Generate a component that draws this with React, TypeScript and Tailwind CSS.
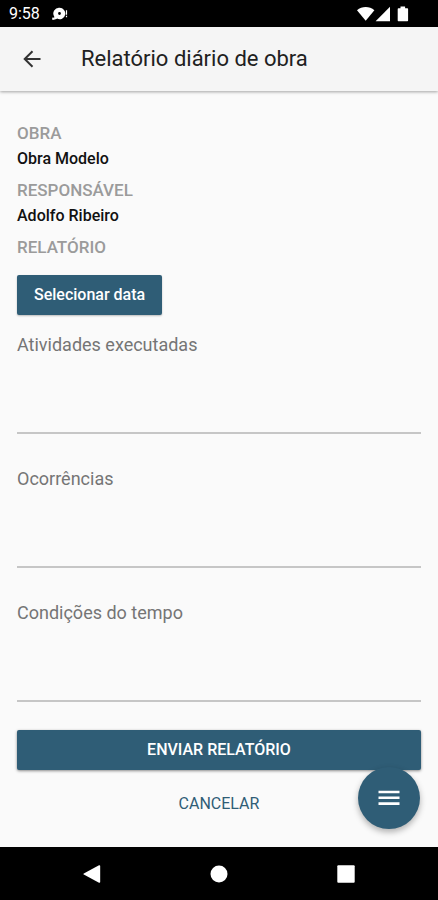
import { ReactNode, useState } from 'react';

interface InfoRowProps {
  label: string;
  value: string;
}

interface ReportFieldProps {
  id: string;
  label: string;
  value: string;
  onChange: (value: string) => void;
}

const reportFields = [
  { id: 'atividades', label: 'Atividades executadas' },
  { id: 'ocorrencias', label: 'Ocorrências' },
  { id: 'tempo', label: 'Condições do tempo' },
];

function StatusBar() {
  return (
    <div className="h-[27px] bg-black text-white flex items-center justify-between pl-[9px] pr-[29px]">
      <div className="flex items-center gap-3">
        <span className="text-base leading-6">9:58</span>
        <svg width="16" height="14" viewBox="0 0 16 14" fill="currentColor" aria-hidden="true">
          <path
            fillRule="evenodd"
            d="M7.500 .8a5.700 5.700 0 1 1-2.400 10.800c-.8.700-2 1-3.400 1 .4-1 .6-2 .5-3.100A5.700 5.700 0 0 1 7.500.8zm0 4.300a1.400 1.400 0 1 0 0 2.800 1.400 1.400 0 0 0 0-2.800z"
          />
          <path d="M.2 10.600h2v2.200h-2z" />
          <path d="M13.900 3.200h1.200v4.600h-1.200zM13.900 8.700h1.200v1.500h-1.200z" />
        </svg>
      </div>
      <div className="flex items-center" aria-hidden="true">
        <svg width="52" height="16" viewBox="0 0 52 16" fill="currentColor">
          <path d="M0 4.200C5-.2 12.400-.2 17.400 4.200L8.700 14.800z" />
          <path d="M18.600 15.200L33 .8v14.400z" />
          <path d="M43.500.4h4.600v1.800h2c.6 0 1 .4 1 1v11c0 .6-.4 1-1 1h-8.400c-.6 0-1-.4-1-1v-11c0-.6.4-1 1-1h1.800z" />
        </svg>
      </div>
    </div>
  );
}

function AppBar({ children }: { children: ReactNode }) {
  return (
    <header className="relative h-16 bg-[#f5f5f5] flex items-center px-3 shadow-[0_1px_3px_rgba(0,0,0,0.35)]">
      <button type="button" aria-label="Voltar" className="size-10 flex items-center justify-center text-[#333]">
        <svg width="18" height="18" viewBox="0 0 18 18" fill="none" stroke="currentColor" strokeWidth="2">
          <path d="M17.500 9H2M9.500 1.200L1.700 9l7.800 7.800" />
        </svg>
      </button>
      <h1 className="ml-[29px] text-[22px] leading-8 text-[#212121]">{children}</h1>
    </header>
  );
}

function InfoRow({ label, value }: InfoRowProps) {
  return (
    <div>
      <dt className="text-[17px] leading-[25px] font-medium text-[#9b9b9b]">{label}</dt>
      <dd className="text-base leading-[25px] font-medium text-[#111]">{value}</dd>
    </div>
  );
}

function ReportField({ id, label, value, onChange }: ReportFieldProps) {
  return (
    <div className="flex flex-col">
      <label htmlFor={id} className="text-lg leading-6 text-[#757575]">
        {label}
      </label>
      <textarea
        id={id}
        value={value}
        onChange={(e) => onChange(e.target.value)}
        className="h-[77px] resize-none bg-transparent border-b-2 border-[#c6c6c6] text-base outline-none focus:border-[#2f5d76]"
      />
    </div>
  );
}

function NavigationBar() {
  return (
    <nav className="h-[53px] bg-black text-white flex items-center justify-between px-[83px]">
      <button type="button" aria-label="Voltar no sistema">
        <svg width="18" height="18" viewBox="0 0 18 18" fill="currentColor">
          <path d="M16 .3c.6-.3 1.200 0 1.200.7v16c0 .7-.6 1-1.200.7L.8 9.600c-.5-.3-.5-.9 0-1.200z" />
        </svg>
      </button>
      <button type="button" aria-label="Início">
        <svg width="18" height="18" viewBox="0 0 18 18" fill="currentColor">
          <circle cx="9" cy="9" r="8.500" />
        </svg>
      </button>
      <button type="button" aria-label="Aplicativos recentes">
        <svg width="18" height="18" viewBox="0 0 18 18" fill="currentColor">
          <rect x=".3" y=".3" width="17.400" height="17.400" rx="1" />
        </svg>
      </button>
    </nav>
  );
}

export default function App() {
  const [values, setValues] = useState<Record<string, string>>({});

  const handleChange = (id: string, value: string) => {
    setValues((prev) => ({ ...prev, [id]: value }));
  };

  return (
    <div className="min-h-screen flex flex-col bg-[#fafafa] font-[Roboto,sans-serif]">
      <StatusBar />
      <AppBar>Relatório diário de obra</AppBar>

      <main className="relative flex-1 px-[17px] pt-[30px] pb-4">
        <form onSubmit={(e) => e.preventDefault()}>
          <dl className="flex flex-col gap-[7px]">
            <InfoRow label="OBRA" value="Obra Modelo" />
            <InfoRow label="RESPONSÁVEL" value="Adolfo Ribeiro" />
          </dl>
          <h2 className="mt-[7px] text-[17px] leading-[25px] font-medium text-[#9b9b9b]">RELATÓRIO</h2>

          <button
            type="button"
            className="mt-[15px] h-10 px-[17px] rounded-xs bg-[#2f5d76] text-white text-base font-medium shadow-[0_1px_2px_rgba(0,0,0,0.25)]"
          >
            Selecionar data
          </button>

          <div className="mt-[18px] flex flex-col gap-[33px]">
            {reportFields.map(({ id, label }) => (
              <ReportField
                key={id}
                id={id}
                label={label}
                value={values[id] ?? ''}
                onChange={(value) => handleChange(id, value)}
              />
            ))}
          </div>

          <button
            type="submit"
            className="mt-7 w-full h-10 rounded-xs bg-[#2f5d76] text-white text-base font-medium shadow-[0_1px_3px_rgba(0,0,0,0.45)]"
          >
            ENVIAR RELATÓRIO
          </button>
          <button type="button" className="mt-[14px] w-full h-10 text-base text-[#2f5d76]">
            CANCELAR
          </button>
        </form>

        <button
          type="button"
          aria-label="Menu"
          className="absolute right-[18px] bottom-[18px] size-[62px] rounded-full bg-[#2f5d76] text-white flex items-center justify-center shadow-[0_3px_6px_rgba(0,0,0,0.3)]"
        >
          <svg width="22" height="16" viewBox="0 0 22 16" fill="currentColor">
            <path d="M.5.700h21v2.600H.5zM.5 6.500h21v2.600H.5zM.5 12.300h21v2.600H.5z" />
          </svg>
        </button>
      </main>

      <NavigationBar />
    </div>
  );
}
